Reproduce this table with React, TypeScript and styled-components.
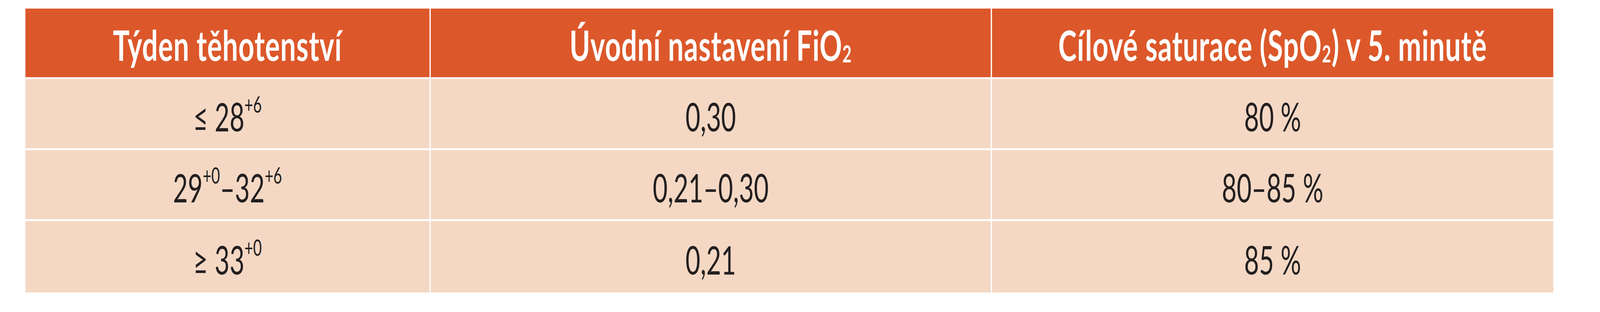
import styled, { createGlobalStyle } from "styled-components";

const GlobalStyle = createGlobalStyle`
  html, body {
    margin: 0;
    padding: 0;
    background: #ffffff;
  }
`;

const DESIGN_WIDTH = 6229;

const Viewport = styled.div`
  width: 100vw;
  height: 800px;
  overflow: hidden;
`;

const Page = styled.div`
  width: ${DESIGN_WIDTH}px;
  box-sizing: border-box;
  padding: 22px 0 0 99px;
  transform-origin: left top;
  font-family: Lato, "Open Sans", "Liberation Sans", sans-serif;
`;

const Table = styled.div`
  display: grid;
  grid-template-columns: 1573px 2180px 2185px;
  grid-template-rows: 176px 177px 177px 183px;
  column-gap: 5px;
  row-gap: 5px;
  width: 5948px;
`;

const HeadCell = styled.div`
  display: flex;
  align-items: center;
  justify-content: center;
  padding-top: 8px;
  box-sizing: border-box;
  background: #dc582a;
  color: #ffffff;
  font-weight: 700;
  font-size: 108px;
  letter-spacing: 1.5px;
  line-height: 1;
  white-space: nowrap;
`;

const Cell = styled.div`
  display: flex;
  align-items: center;
  justify-content: center;
  padding-top: 12px;
  box-sizing: border-box;
  background: #f4d8c4;
  color: #231f20;
  font-weight: 400;
  font-size: 100px;
  line-height: 1;
  white-space: nowrap;
`;

const Sup = styled.sup`
  font-size: 0.58em;
  vertical-align: 0;
  position: relative;
  top: -0.52em;
  line-height: 0;
`;

const Sub = styled.sub`
  font-size: 0.57em;
  vertical-align: 0;
  position: relative;
  top: 0.36em;
  line-height: 0;
`;

const rows = [
  { week: <>≤ 28<Sup>+6</Sup></>, fio: "0,30", spo: "80 %" },
  { week: <>29<Sup>+0</Sup>–32<Sup>+6</Sup></>, fio: "0,21–0,30", spo: "80–85 %" },
  { week: <>≥ 33<Sup>+0</Sup></>, fio: "0,21", spo: "85 %" },
];

export default function App() {
  // the window may be narrower than the design; squeeze the width to fit
  const scale = Math.min(1, window.innerWidth / DESIGN_WIDTH);

  return (
    <>
      <GlobalStyle />
      <Viewport>
        <Page style={{ transform: `scaleX(${scale})` }}>
          <Table>
            <HeadCell>Týden těhotenství</HeadCell>
            <HeadCell>
              Úvodní nastavení FiO<Sub>2</Sub>
            </HeadCell>
            <HeadCell>
              Cílové saturace (SpO<Sub>2</Sub>) v 5. minutě
            </HeadCell>
            {rows.map((r, i) => (
              <>
                <Cell key={`w${i}`}>{r.week}</Cell>
                <Cell key={`f${i}`}>{r.fio}</Cell>
                <Cell key={`s${i}`}>{r.spo}</Cell>
              </>
            ))}
          </Table>
        </Page>
      </Viewport>
    </>
  );
}
